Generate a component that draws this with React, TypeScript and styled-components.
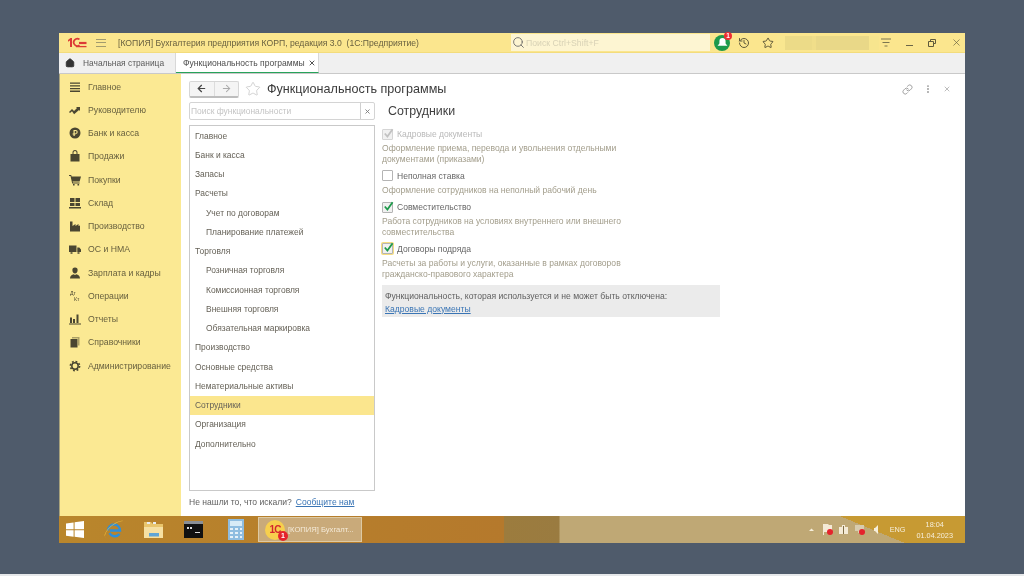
import React from 'react';
import styled, { createGlobalStyle } from 'styled-components';
import { Home, X, Star, History, Link as LinkIcon, MoreVertical, ArrowLeft, ArrowRight, Search } from 'lucide-react';

const GlobalStyle = createGlobalStyle`
  html, body { margin: 0; padding: 0; background: #4f5b6b; overflow: hidden; }
  * { box-sizing: border-box; }
  body { font-family: "Liberation Sans", Arial, sans-serif; }
`;

const Page = styled.div`
  width: 1024px;
  height: 576px;
  padding: 33px 59px 0;
  background: #4f5b6b;
  border-bottom: 2px solid #e6e8ea;
  filter: blur(0.45px);
`;

const Desktop = styled.div`
  width: 906px;
  height: 510px;
  display: flex;
  flex-direction: column;
`;

const TitleBar = styled.header`
  height: 20px;
  flex: none;
  display: flex;
  align-items: center;
  background: #fbe68e;
  border-bottom: 1px solid #f3dc7c;
  color: #696140;
  font-size: 8.64px;
`;

const Logo = styled.svg`
  width: 20px;
  height: 11px;
  margin-left: 8px;
`;

const Burger = styled.div`
  width: 10px;
  height: 8px;
  margin-left: 9px;
  border-top: 1px solid #a29b6e;
  border-bottom: 1px solid #a29b6e;
  position: relative;
  &::after {
    content: '';
    position: absolute;
    left: 0;
    right: 0;
    top: 2.5px;
    height: 1px;
    background: #a29b6e;
  }
`;

const AppTitle = styled.span`
  margin-left: 12px;
  width: 393px;
  white-space: nowrap;
`;

const GlobalSearch = styled.div`
  width: 199px;
  height: 17px;
  display: flex;
  align-items: center;
  gap: 1px;
  padding-left: 1px;
  background: #fdf5d2;
  color: #d8d2b6;
  font-size: 8.7px;
`;

const TitleIcons = styled.div`
  display: flex;
  align-items: center;
  margin-left: 4px;
  gap: 8px;
  & > :last-child { margin-left: 4px; }
`;

const BellBadge = styled.div`
  position: relative;
  width: 16px;
  height: 16px;
  border-radius: 50%;
  background: #1d9a4b;
  display: flex;
  align-items: center;
  justify-content: center;
`;

const Badge = styled.span`
  position: absolute;
  top: -3px;
  right: -2px;
  width: 8px;
  height: 8px;
  border-radius: 50%;
  background: #ee2c34;
  color: #fff;
  font-size: 6.5px;
  font-weight: bold;
  line-height: 8px;
  text-align: center;
`;

const UserBlur = styled.div`
  width: 102px;
  height: 14px;
  margin-left: 3px;
  background: linear-gradient(90deg, #f9e790 0 8%, #ecdb88 8% 34%, #f0de8a 34% 38%, #e9d888 38% 90%, #f7e58e 90%);
`;

const FilterGlyph = styled.svg`
  width: 12px;
  height: 12px;
  margin-left: 1px;
`;

const WindowButtons = styled.div`
  display: flex;
  align-items: center;
  margin-left: 14px;
  gap: 14px;
  color: #5f5a3c;
`;

const MinBar = styled.div`
  width: 7px;
  height: 1px;
  margin-top: 6px;
  background: #6c6647;
`;

const RestoreGlyph = styled.svg`
  width: 10px;
  height: 10px;
`;

const TabBar = styled.nav`
  height: 21px;
  flex: none;
  display: flex;
  background: #f0f0f0;
  border-bottom: 1px solid #c9c9c9;
`;

const HomeTab = styled.div`
  width: 117px;
  display: flex;
  align-items: center;
  gap: 8px;
  padding-left: 6px;
  font-size: 8.4px;
  color: #5a5a5a;
  border-right: 1px solid #d8d8d8;
`;

const ActiveTab = styled.div`
  width: 143px;
  height: 20px;
  display: flex;
  align-items: center;
  gap: 3px;
  padding-left: 7px;
  background: #fff;
  font-size: 8.55px;
  color: #4d4d4d;
  white-space: nowrap;
  border-right: 1px solid #d8d8d8;
  border-bottom: 1px solid #27a35a;
`;

const Body = styled.div`
  flex: 1;
  display: flex;
  min-height: 0;
`;

const Sidebar = styled.aside`
  width: 122px;
  flex: none;
  display: flex;
  flex-direction: column;
  padding-top: 1px;
  background: #fbe993;
  border-left: 1px solid #a8a27c;
`;

const SideItem = styled.div`
  height: 23.25px;
  flex: none;
  display: flex;
  align-items: center;
  font-size: 8.7px;
  color: #665f3e;
  white-space: nowrap;
`;

const SideIcon = styled.svg`
  width: 12px;
  height: 12px;
  margin: 0 7px 0 9px;
  flex: none;
  fill: #4a4631;
`;

const Main = styled.main`
  flex: 1;
  display: flex;
  flex-direction: column;
  background: #fff;
  padding: 6px 0 0 8px;
  min-width: 0;
`;

const FormHead = styled.div`
  height: 18px;
  flex: none;
  display: flex;
  align-items: center;
`;

const NavButtons = styled.div`
  width: 50px;
  height: 17px;
  display: flex;
  border: 1px solid #d6d6d6;
  border-bottom: 2px solid #bdbdbd;
  border-radius: 2px;
  background: #f4f4f4;
`;

const NavButton = styled.div`
  flex: 1;
  display: flex;
  align-items: center;
  justify-content: center;
  & + & { border-left: 1px solid #dcdcdc; }
`;

const FavStar = styled(Star)`
  margin-left: 6px;
  flex: none;
`;

const FormTitle = styled.h1`
  margin: 0 0 0 6px;
  font-size: 12.6px;
  font-weight: normal;
  color: #3b3b3b;
  white-space: nowrap;
`;

const HeadActions = styled.div`
  margin-left: auto;
  display: flex;
  align-items: center;
  gap: 10px;
  padding-right: 14px;
  color: #9a9a9a;
`;

const Columns = styled.div`
  flex: 1;
  display: flex;
  margin-top: 4px;
  min-height: 0;
`;

const LeftColumn = styled.div`
  width: 186px;
  flex: none;
  display: flex;
  flex-direction: column;
`;

const SearchBox = styled.div`
  height: 18px;
  flex: none;
  display: flex;
  align-items: center;
  border: 1px solid #d4d4d4;
  border-radius: 2px;
  font-size: 8.45px;
  color: #c4c4c4;
`;

const SearchText = styled.span`
  flex: 1;
  padding-left: 1px;
`;

const SearchClear = styled.div`
  width: 14px;
  height: 16px;
  display: flex;
  align-items: center;
  justify-content: center;
  border-left: 1px solid #cfcfcf;
  color: #777;
`;

const SectionList = styled.div`
  height: 366px;
  flex: none;
  margin-top: 5px;
  border: 1px solid #c9c9c9;
`;

const SectionItem = styled.div<{ $child?: boolean; $active?: boolean }>`
  height: 19.25px;
  display: flex;
  align-items: center;
  padding-left: ${p => (p.$child ? 16 : 5)}px;
  font-size: 8.45px;
  color: #666258;
  background: ${p => (p.$active ? '#fbe68e' : 'transparent')};
`;

const Hint = styled.div`
  margin-top: 6px;
  font-size: 8.55px;
  color: #5f5f5f;
  white-space: nowrap;
`;

const LinkText = styled.a`
  color: #3a75b5;
  text-decoration: underline;
`;

const HintLink = styled.span`
  margin-left: 4px;
`;

const Details = styled.section`
  width: 338px;
  margin-left: 7px;
  margin-top: -3px;
  display: flex;
  flex-direction: column;
`;

const SectionTitle = styled.h2`
  margin: 0 0 5px 6px;
  height: 24px;
  display: flex;
  align-items: center;
  font-size: 12.4px;
  font-weight: normal;
  color: #3f3f3f;
`;

const OptionRow = styled.div<{ $disabled?: boolean; $gap: number }>`
  display: flex;
  align-items: center;
  gap: 4px;
  height: 12px;
  margin-top: ${p => p.$gap}px;
  font-size: 8.55px;
  color: ${p => (p.$disabled ? '#b9b9b9' : '#666')};
`;

const CheckBox = styled.div<{ $disabled?: boolean; $focus?: boolean; $checked?: boolean }>`
  position: relative;
  width: 11px;
  height: 11px;
  flex: none;
  border: 1px solid ${p => (p.$disabled ? '#d5d5d5' : '#b4b4b4')};
  border-radius: 1px;
  background: ${p => (p.$checked ? '#f1f1f1' : '#fff')};
  box-shadow: ${p => (p.$focus ? '0 0 0 1px #f6dd80' : 'none')};
`;

const CheckMark = styled.svg`
  position: absolute;
  left: 0;
  top: -2px;
  width: 11px;
  height: 11px;
`;

const Description = styled.p`
  margin: 3px 0 0;
  width: 260px;
  font-size: 8.55px;
  line-height: 10.8px;
  color: #a29d8b;
`;

const InfoPanel = styled.div`
  margin-top: 5px;
  height: 32px;
  padding: 5px 3px 0;
  background: #ebebeb;
  font-size: 8.6px;
  line-height: 13px;
  color: #5f5f5f;
`;

const Taskbar = styled.footer`
  height: 27px;
  flex: none;
  display: flex;
  align-items: center;
  padding-left: 7px;
  background:
    linear-gradient(22.6deg, transparent 325px, #c79a33 325px),
    linear-gradient(90deg, #b9862c 0, #b5792c 445px, #9c7c3e 445px, #9a7b40 500px, #bfa875 501px, #bfa875 100%);
`;

const StartIcon = styled.svg`
  width: 18px;
  height: 17px;
  flex: none;
`;

const TaskIcon = styled.svg<{ $w?: number; $gap?: number }>`
  width: ${p => p.$w ?? 21}px;
  height: 21px;
  margin-left: ${p => p.$gap ?? 19}px;
  flex: none;
`;

const ActiveTask = styled.div`
  width: 104px;
  height: 25px;
  margin-left: 14px;
  flex: none;
  display: flex;
  align-items: center;
  gap: 3px;
  padding-left: 6px;
  background: #c9aa7a;
  border: 1px solid #ddcaa4;
  color: #f4ead8;
  font-size: 7.6px;
  white-space: nowrap;
`;

const TaskLogo = styled.div`
  position: relative;
  width: 20px;
  height: 20px;
  border-radius: 50%;
  background: #f7cf4d;
  color: #d3262d;
  font-size: 10px;
  font-weight: bold;
  line-height: 20px;
  text-align: center;
  letter-spacing: -1px;
`;

const TaskBadge = styled.span`
  position: absolute;
  right: -3px;
  bottom: -1px;
  width: 10px;
  height: 10px;
  border-radius: 50%;
  background: #e5232c;
  color: #fff;
  font-size: 7px;
  line-height: 10px;
  letter-spacing: 0;
`;

const Tray = styled.div`
  margin-left: auto;
  display: flex;
  align-items: center;
  gap: 5px;
  padding-right: 12px;
  color: #f6eeda;
  font-size: 7.3px;
`;

const TrayIcon = styled.svg`
  width: 11px;
  height: 11px;
  flex: none;
`;

const Lang = styled.span`
  margin-left: 4px;
`;

const Clock = styled.div`
  margin-left: 6px;
  text-align: center;
  line-height: 11px;
`;

const GreenCheck = () => (
  <CheckMark viewBox="0 0 11 11">
    <path d="M1.8 5.5l2.6 3L9.6 1.2" fill="none" stroke="#1f9a4c" strokeWidth="1.8" />
  </CheckMark>
);

const GreyCheck = () => (
  <CheckMark viewBox="0 0 11 11">
    <path d="M1.8 5.5l2.6 3L9.6 1.2" fill="none" stroke="#c2c2c2" strokeWidth="1.8" />
  </CheckMark>
);

const sideItems: [string, React.ReactNode][] = [
  ['Главное', <path d="M1 1.5h10v1.3H1zM1 4.2h10v1.3H1zM1 6.9h10v1.3H1zM1 9.6h10v1.3H1z" />],
  ['Руководителю', <path d="M0 8l3-3 2 2 3-3-1-1h4v4l-1-1-4.9 4.3L3 7.2 1 9z" />],
  ['Банк и касса', <path fillRule="evenodd" d="M6 .5a5.5 5.5 0 1 1 0 11 5.5 5.5 0 0 1 0-11zM4.5 3v3.4H3.6v1h.9V9h1.2V7.4h1V6.4h-1V4h.9a1 1 0 0 1 0 2h-.4v1h.5a2 2 0 0 0 0-4z" />],
  ['Продажи', <path d="M1.5 4h2V2.5a2.5 2.5 0 0 1 5 0V4h2v7.5h-9zM4.5 4h3V2.5a1.5 1.5 0 0 0-3 0z" />],
  ['Покупки', <path d="M0 1h2.2l.4 1.5H12L10.6 7.5H3.6L4 8.5h6.6v1H3.2L1.5 2H0zM4 10h1.6v1.5H4zM8.5 10h1.6v1.5H8.5z" />],
  ['Склад', <path d="M1 1h4.5v4H1zM6.5 1H11v4H6.5zM1 6h4.5v3H1zM6.5 6H11v3H6.5zM0 10h12v1.5H0z" />],
  ['Производство', <path d="M1 11.5V1.5h2.5V6l3-2v2l3-2v2l1.5-.5v6z" />],
  ['ОС и НМА', <path d="M0 2.5h7.5V9H0zM8.3 4.5h2L12 6.5V9H8.3zM1.5 9.2h2v1.5h-2zM8.5 9.2h2v1.5h-2z" />],
  ['Зарплата и кадры', <path d="M6 .5a2.6 2.6 0 0 1 2.6 2.8C8.6 5 7.6 6.5 6 6.5S3.4 5 3.4 3.3A2.6 2.6 0 0 1 6 .5zM1 11.5C1 8.8 3 7.5 4.6 7.2L6 8l1.4-.8C9 7.5 11 8.8 11 11.5z" />],
  ['Операции', <><text x="1" y="5" fontSize="5.2" fontFamily="Liberation Sans">Дт</text><text x="5" y="11" fontSize="5.2" fontFamily="Liberation Sans">Кт</text></>],
  ['Отчеты', <path d="M1 4.5h2V10H1zM4 6h2v4H4zM7.5 1.5h2V10h-2zM0 10.5h12v1H0z" />],
  ['Справочники', <><path d="M1.5 3h7v8.5h-7z" /><path opacity=".45" d="M3 1h7.5v8.5H9V2.5H3z" /></>],
  ['Администрирование', <><circle cx="6" cy="6" r="3.2" fill="none" stroke="#4a4631" strokeWidth="1.5" /><circle cx="6" cy="6" r="4.6" fill="none" stroke="#4a4631" strokeWidth="1.6" strokeDasharray="1.8 1.8" /></>],
];

const sections: { label: string; child?: boolean; active?: boolean }[] = [
  { label: 'Главное' },
  { label: 'Банк и касса' },
  { label: 'Запасы' },
  { label: 'Расчеты' },
  { label: 'Учет по договорам', child: true },
  { label: 'Планирование платежей', child: true },
  { label: 'Торговля' },
  { label: 'Розничная торговля', child: true },
  { label: 'Комиссионная торговля', child: true },
  { label: 'Внешняя торговля', child: true },
  { label: 'Обязательная маркировка', child: true },
  { label: 'Производство' },
  { label: 'Основные средства' },
  { label: 'Нематериальные активы' },
  { label: 'Сотрудники', active: true },
  { label: 'Организация' },
  { label: 'Дополнительно' },
];

const App: React.FC = () => {
  return (
    <Page>
      <GlobalStyle />
      <Desktop>
        <TitleBar>
          <Logo viewBox="0 0 20 11">
            <path d="M1 3l2.5-2h1.500v9H3V3.6L1 4.800z" fill="#dc3a36" />
            <path d="M12.500 2.400a3.600 3.600 0 1 0 0 5.800" fill="none" stroke="#dc3a36" strokeWidth="1.7" />
            <path d="M9 9.600h10.500" stroke="#dc3a36" strokeWidth="1.3" />
            <path d="M12 6h7.500" stroke="#dc3a36" strokeWidth="2.2" />
          </Logo>
          <Burger />
          <AppTitle>[КОПИЯ] Бухгалтерия предприятия КОРП, редакция 3.0&nbsp; (1С:Предприятие)</AppTitle>
          <GlobalSearch>
            <Search size={13} color="#666" strokeWidth={1.6} />
            Поиск Ctrl+Shift+F
          </GlobalSearch>
          <TitleIcons>
            <BellBadge>
              <svg width="11" height="11" viewBox="0 0 10 10">
                <path d="M5 1a2.8 2.8 0 0 1 2.8 2.8V6L9.5 8h-9l1.7-2V3.8A2.8 2.8 0 0 1 5 1z" fill="#fff" />
              </svg>
              <Badge>1</Badge>
            </BellBadge>
            <History size={12} color="#5f5a3c" />
            <Star size={12} color="#4e4a30" strokeWidth={1.8} />
          </TitleIcons>
          <UserBlur />
          <FilterGlyph viewBox="0 0 12 12">
            <path d="M1 2h10M2.500 5.500h7M4.500 9h3" stroke="#7c7650" fill="none" />
          </FilterGlyph>
          <WindowButtons>
            <MinBar />
            <RestoreGlyph viewBox="0 0 10 10">
              <path d="M3.500 3V1.500h5v4H7M1.500 3.500h5v5h-5z" fill="none" stroke="#5f5a3c" />
            </RestoreGlyph>
            <X size={11} strokeWidth={1.4} />
          </WindowButtons>
        </TitleBar>
        <TabBar>
          <HomeTab>
            <Home size={10} fill="#333" color="#333" />
            Начальная страница
          </HomeTab>
          <ActiveTab>
            Функциональность программы
            <X size={8} strokeWidth={3} color="#555" />
          </ActiveTab>
        </TabBar>
        <Body>
          <Sidebar>
            {sideItems.map(([label, icon]) => (
              <SideItem key={label}>
                <SideIcon viewBox="0 0 12 12">{icon}</SideIcon>
                {label}
              </SideItem>
            ))}
          </Sidebar>
          <Main>
            <FormHead>
              <NavButtons>
                <NavButton><ArrowLeft size={11} strokeWidth={2.6} color="#444" /></NavButton>
                <NavButton><ArrowRight size={11} strokeWidth={2.2} color="#aaa" /></NavButton>
              </NavButtons>
              <FavStar size={16} strokeWidth={1} color="#bdbdbd" />
              <FormTitle>Функциональность программы</FormTitle>
              <HeadActions>
                <LinkIcon size={11} />
                <MoreVertical size={10} strokeWidth={2.6} />
                <X size={8} />
              </HeadActions>
            </FormHead>
            <Columns>
              <LeftColumn>
                <SearchBox>
                  <SearchText>Поиск функциональности</SearchText>
                  <SearchClear><X size={7} strokeWidth={3} /></SearchClear>
                </SearchBox>
                <SectionList>
                  {sections.map(s => (
                    <SectionItem key={s.label} $child={s.child} $active={s.active}>{s.label}</SectionItem>
                  ))}
                </SectionList>
                <Hint>
                  Не нашли то, что искали?<HintLink><LinkText>Сообщите нам</LinkText></HintLink>
                </Hint>
              </LeftColumn>
              <Details>
                <SectionTitle>Сотрудники</SectionTitle>
                <OptionRow $disabled $gap={0}>
                  <CheckBox $disabled $checked><GreyCheck /></CheckBox>
                  Кадровые документы
                </OptionRow>
                <Description>Оформление приема, перевода и увольнения отдельными документами (приказами)</Description>
                <OptionRow $gap={5}>
                  <CheckBox />
                  Неполная ставка
                </OptionRow>
                <Description>Оформление сотрудников на неполный рабочий день</Description>
                <OptionRow $gap={6}>
                  <CheckBox $checked><GreenCheck /></CheckBox>
                  Совместительство
                </OptionRow>
                <Description>Работа сотрудников на условиях внутреннего или внешнего совместительства</Description>
                <OptionRow $gap={5}>
                  <CheckBox $checked $focus><GreenCheck /></CheckBox>
                  Договоры подряда
                </OptionRow>
                <Description>Расчеты за работы и услуги, оказанные в рамках договоров гражданско-правового характера</Description>
                <InfoPanel>
                  Функциональность, которая используется и не может быть отключена:
                  <br />
                  <LinkText>Кадровые документы</LinkText>
                </InfoPanel>
              </Details>
            </Columns>
          </Main>
        </Body>
        <Taskbar>
          <StartIcon viewBox="0 0 18 17">
            <path d="M0 2.500l7.600-1v6.800H0zM8.600 1.300L18 0v8.300H8.600zM0 9.200h7.600v6.500L0 14.700zM8.600 9.200H18V17l-9.400-1.200z" fill="#fff" />
          </StartIcon>
          <TaskIcon viewBox="0 0 21 21">
            <path d="M5 11.500a6 6 0 0 1 12 0H7M16.500 15a6 6 0 0 1-10-1" fill="none" stroke="#2f8fd8" strokeWidth="2.4" />
            <path d="M2.500 19C0 14 10 3 20 2c-3-1-15 4-18.500 14z" fill="#f3c23c" />
          </TaskIcon>
          <TaskIcon viewBox="0 0 21 21">
            <path d="M1 3h7l2 2h10v14H1z" fill="#e9c56c" />
            <path d="M1 8h19v11H1z" fill="#f6e0a2" />
            <path d="M6 14h10v3.500H6z" fill="#5fa5d6" />
            <path d="M4 3h3v2H4zM10 3h3v2h-3z" fill="#e9edf0" />
          </TaskIcon>
          <TaskIcon viewBox="0 0 21 21">
            <path d="M1 2h19v17H1z" fill="#111" />
            <path d="M1 2h19v3H1z" fill="#8a8f96" />
            <path d="M4 8h2v2H4zM7 8h2v2H7zM12 13h5v1h-5z" fill="#ddd" />
          </TaskIcon>
          <TaskIcon $w={16} $gap={24} viewBox="0 0 16 21">
            <path d="M0 0h16v21H0z" fill="#8fbde0" />
            <path d="M2 2h12v5H2z" fill="#d8ebf6" />
            <path d="M2 9h3v2H2zM7 9h3v2H7zM12 9h2v2h-2zM2 13h3v2H2zM7 13h3v2H7zM12 13h2v2h-2zM2 17h3v2H2zM7 17h3v2H7zM12 17h2v2h-2z" fill="#e6f1f8" />
          </TaskIcon>
          <ActiveTask>
            <TaskLogo>1С<TaskBadge>1</TaskBadge></TaskLogo>
            [КОПИЯ] Бухгалт...
          </ActiveTask>
          <Tray>
            <TrayIcon viewBox="0 0 11 11"><path d="M3 7l2.500-2.500L8 7z" fill="#f6eeda" /></TrayIcon>
            <TrayIcon viewBox="0 0 11 11"><path d="M1 0h5l1 1h3v7H2v3H1z" fill="#f4ead6" /><circle cx="8" cy="8" r="3" fill="#e5232c" /></TrayIcon>
            <TrayIcon viewBox="0 0 11 11"><path d="M1 3h3V1h3v2h3v7H1z" fill="#f4ead6" /><path d="M5 2h1v8H5z" fill="#7f6d45" /></TrayIcon>
            <TrayIcon viewBox="0 0 11 11"><path d="M1 1h9v6H7v2H4V7H1z" fill="#d8ccae" /><circle cx="8" cy="8" r="3" fill="#e5232c" /></TrayIcon>
            <TrayIcon viewBox="0 0 11 11"><path d="M4 4h1l3-3v9L5 7H4z" fill="#f6eeda" /></TrayIcon>
            <Lang>ENG</Lang>
            <Clock>18:04<br />01.04.2023</Clock>
          </Tray>
        </Taskbar>
      </Desktop>
    </Page>
  );
};

export default App;
